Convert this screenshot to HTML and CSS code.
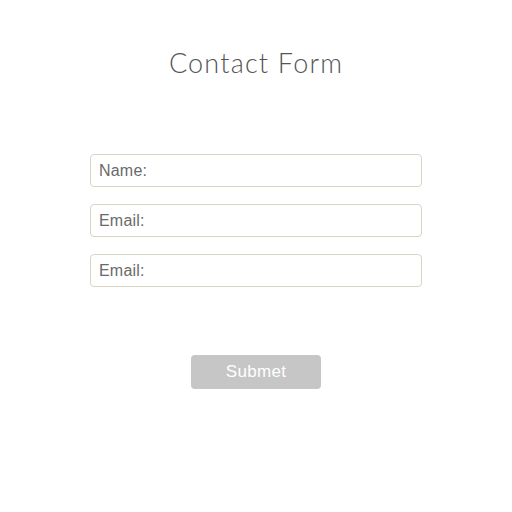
FILE: index.html
```html
<!DOCTYPE html>
<html lang="en">
<head>
    <meta charset="UTF-8">
    <meta name="viewport" content="width=device-width, initial-scale=1.0">
    <title>Contact Form</title>
    <link rel="stylesheet" href="styles.css">
</head>
<body>

<div class="container">
    <h1 class="title">Contact Form</h1>

    <!-- Contact fields -->
    <form class="contact-form" onsubmit="return false;">
        <input type="text" class="input-box" placeholder="Name:">
        <input type="email" class="input-box" placeholder="Email:">
        <input type="email" class="input-box" placeholder="Email:">
        <button type="submit" class="button">Submet</button>
    </form>
</div>

</body>
</html>
```

FILE: styles.css
```css
/* Global Styles */
body {
    margin: 0;
    padding: 0;
    font-family: "Liberation Sans", Arial, sans-serif;
    background-color: #fff;
    color: #555;
}
.container {
    width: 332px;
    margin: 0 auto;
    padding-top: 46px;
}
.title {
    margin: 0;
    font-family: Lato, sans-serif;
    font-weight: 300;
    font-size: 27px;
    line-height: 34px;
    letter-spacing: 1.2px;
    color: #555;
    text-align: center;
}
/* Form */
.contact-form {
    margin-top: 74px;
    display: flex;
    flex-direction: column;
    align-items: center;
    gap: 17px;
}
.input-box {
    box-sizing: border-box;
    width: 100%;
    height: 33px;
    padding: 0 8px;
    font-family: "Liberation Sans", Arial, sans-serif;
    font-size: 16px;
    letter-spacing: 0.2px;
    border: 1px solid #d9d5c3;
    border-radius: 4px;
    background-color: #fff;
    color: #555;
    outline: none;
}
.input-box::placeholder {
    color: #6a6a6a;
}
.button {
    margin-top: 51px;
    width: 130px;
    height: 34px;
    padding: 0;
    font-family: "Liberation Sans", Arial, sans-serif;
    font-size: 17px;
    letter-spacing: 0.3px;
    background-color: #c6c6c6;
    color: #fff;
    border: none;
    border-radius: 4px;
    cursor: pointer;
}
```
